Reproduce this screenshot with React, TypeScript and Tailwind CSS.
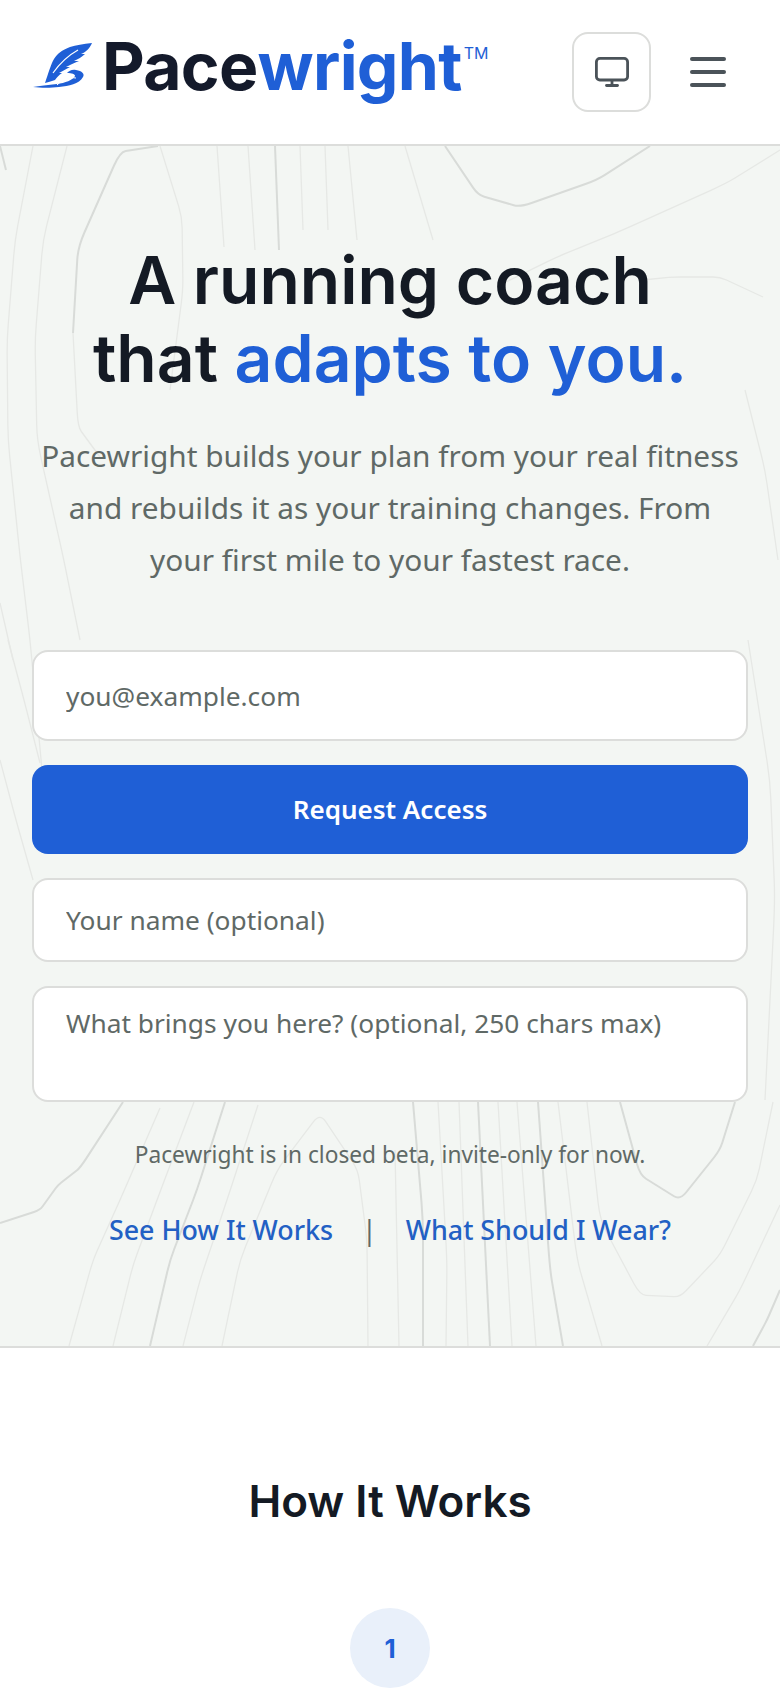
const thinLines = [
  "33,146 15,240 7,340 8,440 20,556 30,640 42,770",
  "67,146 43,240 35,340 37,440 63,556 80,640",
  "100,457 78,427 73,333",
  "160,146 182,217 183,290 170,390",
  "217,146 224,247",
  "248,146 255,250",
  "300,146 303,230",
  "325,146 328,230",
  "348,146 357,240",
  "405,146 433,240",
  "780,150 727,183 623,230 557,257 500,285",
  "643,280 673,277 720,277 763,297",
  "745,390 765,470 778,560",
  "0,603 13,660",
  "8,640 24,700 40,763",
  "0,760 16,820 33,880",
  "748,640 770,780 775,900 765,1100",
  "160,1108 120,1200 93,1260 69,1346",
  "194,1102 157,1200 133,1265 113,1346",
  "258,1105 227,1200 200,1280 183,1346",
  "222,1346 240,1260 277,1170 320,1113 358,1170 367,1240 368,1346",
  "395,1150 399,1346",
  "438,1102 447,1260 446,1346",
  "459,1102 468,1346",
  "498,1102 512,1346",
  "517,1102 536,1346",
  "558,1102 577,1260 602,1346",
  "587,1102 600,1220 640,1295 680,1297 720,1255 757,1180 773,1102",
  "707,1346 740,1290 780,1205",
];

const heavyLines = [
  "0,146 6,170",
  "158,146 120,152 78,247 73,333",
  "445,146 478,195 520,207 597,180 650,146",
  "275,146 279,250",
  "123,1102 80,1168 58,1185 40,1210 0,1223",
  "225,1102 197,1190 170,1260 150,1346",
  "413,1102 423,1220 423,1346",
  "478,1102 490,1346",
  "538,1102 550,1270 563,1346",
  "620,1102 640,1175 680,1200 720,1150 735,1102",
  "753,1346 767,1320 780,1290",
];

// rounds the corners of a contour a little, like the reference's map lines
function smooth(points: string) {
  const pts = points.split(" ").map((p) => p.split(",").map(Number));
  let d = `M${pts[0][0]} ${pts[0][1]}`;
  for (let i = 1; i < pts.length - 1; i++) {
    const [x, y] = pts[i];
    const [nx, ny] = pts[i + 1];
    const [px, py] = pts[i - 1];
    d += ` L${x + (px - x) * 0.15} ${y + (py - y) * 0.15} Q${x} ${y} ${x + (nx - x) * 0.15} ${y + (ny - y) * 0.15}`;
  }
  const last = pts[pts.length - 1];
  return `${d} L${last[0]} ${last[1]}`;
}

function TopoBackground() {
  return (
    <svg className="absolute left-0 top-[-146px] h-[1346px] w-[780px]" viewBox="0 0 780 1346" fill="none">
      {thinLines.map((points) => (
        <path key={points} d={smooth(points)} stroke="#e6e8e5" strokeWidth="1.3" />
      ))}
      {heavyLines.map((points) => (
        <path key={points} d={smooth(points)} stroke="#d8dbd8" strokeWidth="2" />
      ))}
    </svg>
  );
}

function Logo() {
  return (
    <svg width="60" height="48" viewBox="0 0 60 48" fill="none" className="shrink-0">
      <path
        d="M59 1 C50 2 43 3 37 5 C29 8 24 12 21 17 C18 22 15 32 12 41 C16 40 19 39 22 38 C24 35 26 33 29 31 L26 31 C30 29 33 27 37 25 L33 25 C37 23 41 21 46 19 L41 19 C45 17 49 15 52 12 L48 12 C53 10 57 6 59 1 Z"
        fill="#1f5fd6"
      />
      <path d="M45 8 C36 13 27 21 20 31" stroke="#fff" strokeWidth="1.2" />
      <path
        d="M0 45 C8 46 18 46 26 45 C36 44 46 42 50 35 C52 32 49 29 43 28 C39 27 36 29 34 31 C39 31 42 32 42 34 C40 38 32 41 24 42 C15 43 6 44 0 45 Z"
        fill="#1f5fd6"
      />
      <path d="M24 43 C30 37 37 35 43 36" stroke="#fff" strokeWidth="1" />
    </svg>
  );
}

function MonitorIcon() {
  return (
    <svg width="36" height="32" viewBox="0 0 36 32" fill="none" className="text-[#4b5359]">
      <rect x="2.4" y="2.4" width="31.2" height="21.6" rx="3.5" stroke="currentColor" strokeWidth="2.8" />
      <path d="M18 24 V29" stroke="currentColor" strokeWidth="2.8" />
      <path d="M12.5 29.5 H23.5" stroke="currentColor" strokeWidth="2.8" strokeLinecap="round" />
    </svg>
  );
}

export default function App() {
  return (
    <div className="h-[1688px] w-[780px] overflow-hidden bg-white font-['Noto_Sans',sans-serif] text-[#111827]">
      <header className="flex h-[146px] items-center justify-between border-b-2 border-[#dcdddb] bg-white pl-[33px] pr-[54px]">
        <div className="mb-[12px] flex items-center gap-[9px]">
          <Logo />
          <div className="flex items-start font-['Inter',sans-serif] text-[66px] font-bold leading-none tracking-[-0.7px]">
            <span className="text-[#141a2b]">Pace</span>
            <span className="text-[#1f5fd6]">wright</span>
            <span className="ml-[2px] mt-[12px] text-[16px] font-normal leading-[16px] tracking-normal text-[#1f5fd6]">TM</span>
          </div>
        </div>
        <div className="flex items-center gap-[39px]">
          <button className="flex h-[80px] w-[79px] items-center justify-center rounded-[16px] border-2 border-[#dcdddb] bg-white">
            <MonitorIcon />
          </button>
          <div className="flex w-[36px] flex-col gap-[9px]">
            <span className="h-[4px] rounded-full bg-[#4b5359]" />
            <span className="h-[4px] rounded-full bg-[#4b5359]" />
            <span className="h-[4px] rounded-full bg-[#4b5359]" />
          </div>
        </div>
      </header>

      <section className="relative h-[1202px] overflow-hidden border-b-2 border-[#dcdddb] bg-[#f3f6f3] px-[32px] pt-[95px]">
        <TopoBackground />
        <div className="relative">
          <h1 className="text-center font-['Inter',sans-serif] text-[66px] font-semibold leading-[78px] text-[#141a24]">
            A running coach
            <br />
            that <span className="text-[#1f5fd6]">adapts to you.</span>
          </h1>
          <p className="mt-[33px] px-[8px] text-center text-[29.8px] leading-[52px] text-[#5f6966]">
            Pacewright builds your plan from your real fitness and rebuilds it as your training changes. From your first mile to your fastest race.
          </p>
          <form className="mt-[64px] flex flex-col gap-[24px]">
            <input
              placeholder="you@example.com"
              className="h-[91px] w-full rounded-[16px] border-2 border-[#dcdddb] bg-white px-[32px] text-[26.3px] text-[#111827] placeholder:text-[#5f6966]"
            />
            <button type="button" className="h-[89px] w-full rounded-[16px] bg-[#1f5fd6] text-[26px] font-semibold text-white">
              Request Access
            </button>
            <input
              placeholder="Your name (optional)"
              className="h-[84px] w-full rounded-[16px] border-2 border-[#dcdddb] bg-white px-[32px] text-[26.3px] text-[#111827] placeholder:text-[#5f6966]"
            />
            <textarea
              placeholder="What brings you here? (optional, 250 chars max)"
              className="h-[116px] w-full resize-none rounded-[16px] border-2 border-[#dcdddb] bg-white px-[32px] py-[15px] text-[26.3px] leading-[40px] text-[#111827] placeholder:text-[#5f6966]"
            />
          </form>
          <p className="mt-[35px] text-center text-[22.7px] leading-[36px] text-[#5f6966]">
            Pacewright is in closed beta, invite-only for now.
          </p>
          <div className="mt-[37px] flex items-center justify-center gap-[29px] text-[26.8px] font-medium leading-[40px] text-[#2260c4]">
            <a>See How It Works</a>
            <span className="font-normal text-[#5f6966]">|</span>
            <a>What Should I Wear?</a>
          </div>
        </div>
      </section>

      <section className="flex flex-col items-center bg-white pt-[125px]">
        <h2 className="font-['Inter',sans-serif] text-[44px] font-semibold leading-[56px] text-[#141a24]">How It Works</h2>
        <div className="mt-[79px] flex h-[80px] w-[80px] items-center justify-center rounded-full bg-[#e9f0fa] font-['Inter',sans-serif] text-[26px] font-bold text-[#1f5fd6]">
          1
        </div>
      </section>
    </div>
  );
}
